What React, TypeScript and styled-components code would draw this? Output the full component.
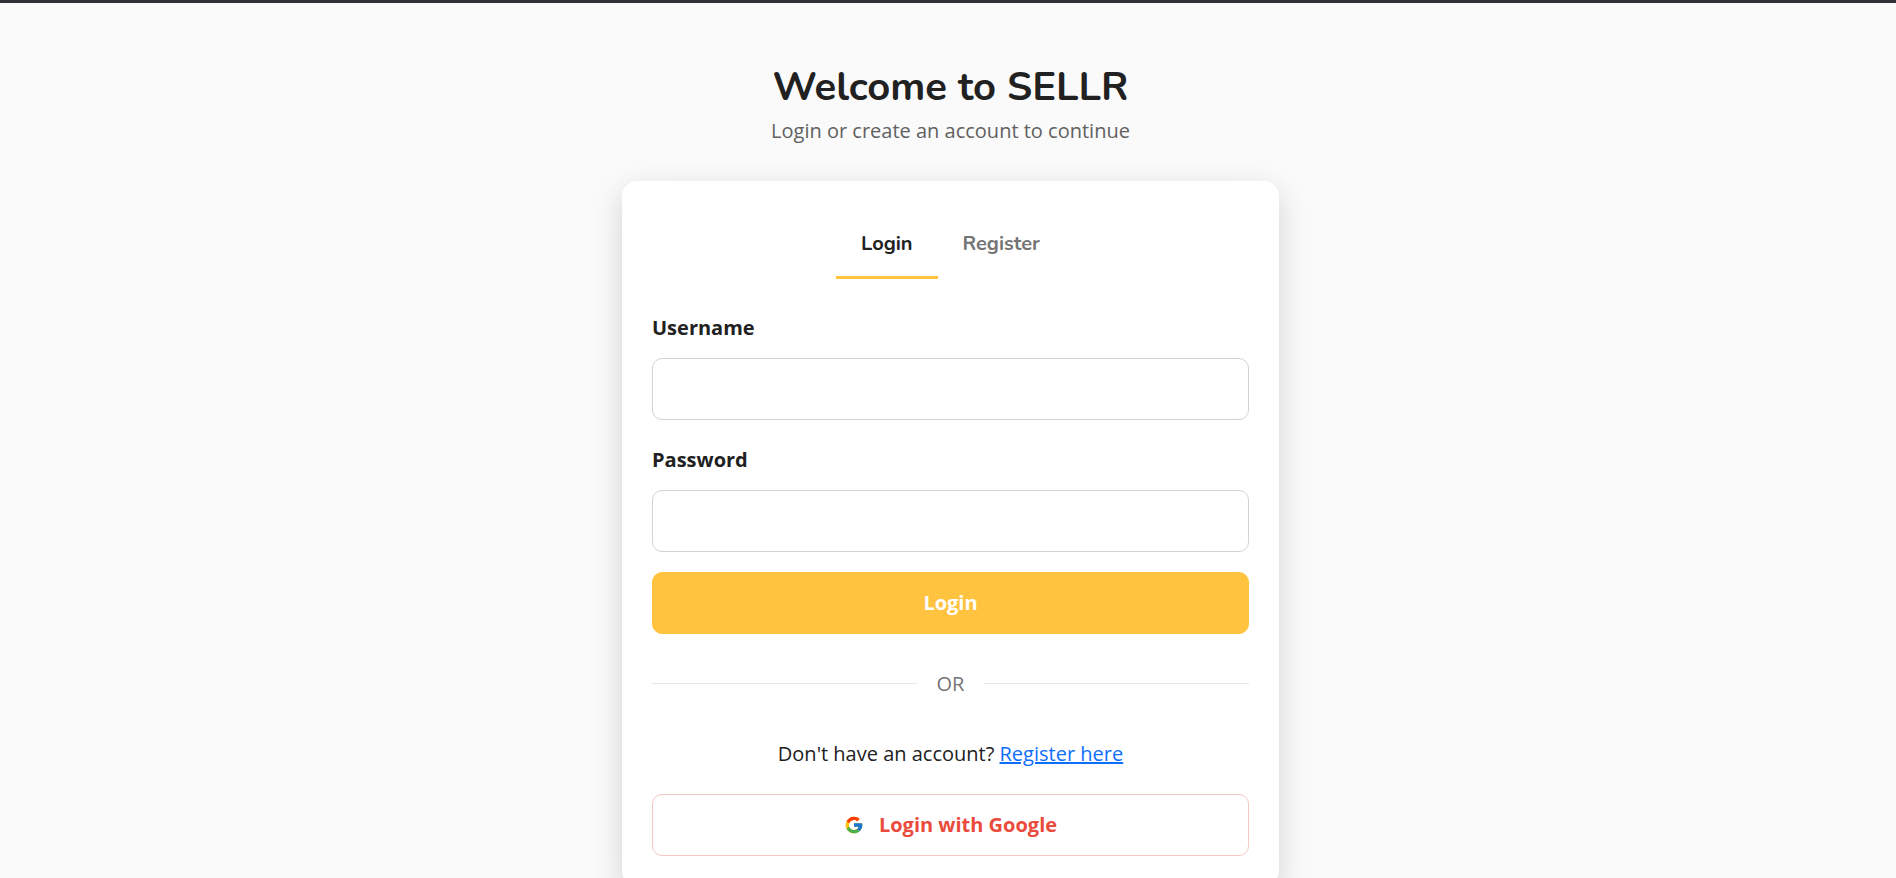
import React, { useState } from 'react';
import styled, { createGlobalStyle } from 'styled-components';
import { FcGoogle } from 'react-icons/fc';

const GlobalStyle = createGlobalStyle`
  *, *::before, *::after { box-sizing: border-box; }
  body {
    margin: 0;
    background: #fafafa;
    color: #212121;
    font: 400 20px/30px 'Open Sans', sans-serif;
  }
`;

const headingFont = "Nunito, Lato, 'Open Sans', sans-serif";

const Page = styled.div`
  border-top: 3px solid #323035;
  padding: 60px 0 40px 5px;
`;

const Header = styled.header`
  text-align: center;
  margin-bottom: 35px;
`;

const Title = styled.h1`
  margin: 0 0 5px;
  font: 700 40px/48px ${headingFont};
`;

const Subtitle = styled.p`
  margin: 0;
  color: #616161;
`;

const Card = styled.main`
  width: 100%;
  max-width: 657px;
  margin: 0 auto;
  padding: 30px;
  background: #fff;
  border-radius: 15px;
  box-shadow: 0 10px 30px rgba(0, 0, 0, 0.16);
`;

const Tabs = styled.div`
  display: flex;
  justify-content: center;
  margin-bottom: 34px;
`;

const Tab = styled.button<{ $active: boolean }>`
  padding: 18px 25px 17px;
  border: 0;
  border-bottom: 3px solid ${(p) => (p.$active ? '#ffc340' : 'transparent')};
  background: none;
  color: ${(p) => (p.$active ? '#212121' : '#757575')};
  font: 700 20px/30px ${headingFont};
  cursor: pointer;
`;

const Form = styled.form`
  display: flex;
  flex-direction: column;
`;

const Field = styled.div`
  display: flex;
  flex-direction: column;
  gap: 15px;
  margin-bottom: 25px;

  &:last-of-type {
    margin-bottom: 20px;
  }
`;

const Label = styled.label`
  font-weight: 700;
`;

const Input = styled.input`
  width: 100%;
  height: 62px;
  padding: 15px 20px;
  border: 1px solid #ced4da;
  border-radius: 10px;
  background: #fff;
  color: inherit;
  font: inherit;
`;

const Button = styled.button<{ $outline?: boolean }>`
  display: flex;
  align-items: center;
  justify-content: center;
  gap: 15px;
  width: 100%;
  height: 62px;
  border: 1px solid ${(p) => (p.$outline ? '#f6c7c3' : '#ffc340')};
  border-radius: 10px;
  background: ${(p) => (p.$outline ? '#fff' : '#ffc340')};
  color: ${(p) => (p.$outline ? '#ea4b3c' : '#fff')};
  font: 700 20px/30px 'Open Sans', sans-serif;
  cursor: pointer;
`;

const Divider = styled.div`
  display: flex;
  align-items: center;
  gap: 20px;
  margin: 35px 0 40px;
  color: #757575;

  &::before,
  &::after {
    content: '';
    flex: 1;
    height: 2px;
    border-top: 1px solid #e8e8e8;
  }
`;

const Prompt = styled.p`
  margin: 0 0 25px;
  text-align: center;
`;

const Link = styled.a`
  color: #0d6efd;
`;

export default function App() {
  const [tab, setTab] = useState<'login' | 'register'>('login');

  return (
    <>
      <GlobalStyle />
      <Page>
        <Header>
          <Title>Welcome to SELLR</Title>
          <Subtitle>Login or create an account to continue</Subtitle>
        </Header>
        <Card>
          <Tabs role="tablist">
            <Tab type="button" role="tab" aria-selected={tab === 'login'} $active={tab === 'login'} onClick={() => setTab('login')}>
              Login
            </Tab>
            <Tab type="button" role="tab" aria-selected={tab === 'register'} $active={tab === 'register'} onClick={() => setTab('register')}>
              Register
            </Tab>
          </Tabs>
          <Form onSubmit={(e) => e.preventDefault()}>
            <Field>
              <Label htmlFor="username">Username</Label>
              <Input id="username" type="text" autoComplete="username" />
            </Field>
            <Field>
              <Label htmlFor="password">Password</Label>
              <Input id="password" type="password" autoComplete="current-password" />
            </Field>
            <Button type="submit">Login</Button>
          </Form>
          <Divider>OR</Divider>
          <Prompt>
            Don't have an account? <Link href="#register">Register here</Link>
          </Prompt>
          <Button type="button" $outline>
            <FcGoogle size={20} aria-hidden />
            Login with Google
          </Button>
        </Card>
      </Page>
    </>
  );
}
